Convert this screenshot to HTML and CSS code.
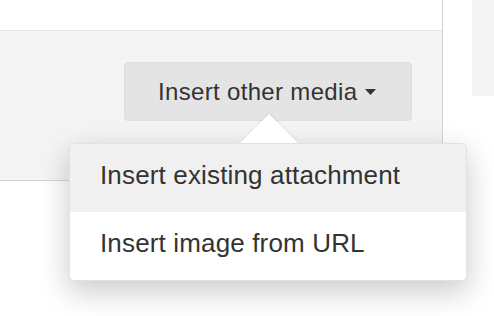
FILE: index.html
```html
<!DOCTYPE html>
<html>
<head>
<meta charset="utf-8">
<link rel="stylesheet" href="styles.css">
</head>
<body>
<div class="page">
  <div class="panel">
    <div class="panel-top"></div>
    <div class="panel-footer">
      <button class="btn">
        <span>Insert other media</span>
        <svg class="caret" width="11" height="6" viewBox="0 0 11 6"><path d="M0 0 H11 L5.5 6 Z" fill="#333"/></svg>
      </button>
    </div>
  </div>
  <div class="side"></div>
  <div class="menu">
    <div class="arrow"></div>
    <div class="item active">Insert existing attachment</div>
    <div class="item">Insert image from URL</div>
  </div>
</div>
</body>
</html>
```

FILE: styles.css
```css
html, body {
  margin: 0;
  padding: 0;
  background: #fff;
}
.page {
  position: relative;
  display: flex;
  align-items: flex-start;
  gap: 29px;
  width: 494px;
  height: 316px;
  overflow: hidden;
  font-family: "Liberation Sans", Arial, sans-serif;
}
.panel {
  width: 442px;
  flex: none;
  border-right: 1px solid #d2d2d2;
}
.panel-top {
  height: 30px;
  background: #fff;
}
.panel-footer {
  background: #f4f4f4;
  border-top: 1px solid #e4e4e4;
  border-bottom: 1px solid #d4d4d4;
  display: flex;
  justify-content: flex-end;
  align-items: flex-start;
  padding: 31px 30px 0 0;
  box-sizing: border-box;
  height: 151px;
}
.btn {
  display: flex;
  align-items: center;
  gap: 8px;
  width: 288px;
  height: 59px;
  box-sizing: border-box;
  padding: 0 0 0 33px;
  background: #e4e4e4;
  border: 1px solid #dedede;
  border-radius: 4px;
  font-family: inherit;
  font-size: 24px;
  letter-spacing: 0.33px;
  color: #333;
  line-height: 24px;
  white-space: nowrap;
}
.btn span {
  padding-top: 1px;
  flex: none;
}
.caret {
  display: block;
  flex: none;
}
.side {
  width: 22px;
  height: 96px;
  background: #f5f5f5;
  flex: none;
}
.menu {
  position: absolute;
  left: 69px;
  top: 143px;
  width: 398px;
  box-sizing: border-box;
  background: #fff;
  border: 1px solid #e2e2e2;
  border-radius: 5px;
  box-shadow: 0 10px 30px rgba(0, 0, 0, 0.22);
}
.arrow {
  position: absolute;
  left: 170px;
  top: -30px;
  width: 0;
  height: 0;
  border-left: 29px solid transparent;
  border-right: 29px solid transparent;
  border-bottom: 29px solid #fff;
  filter: drop-shadow(0 -1px 1px rgba(0, 0, 0, 0.06));
}
.item {
  position: relative;
  height: 68px;
  box-sizing: border-box;
  padding: 17px 30px 0;
  font-size: 26px;
  letter-spacing: 0.15px;
  line-height: 28px;
  color: #333;
  white-space: nowrap;
}
.item.active {
  background: #f0f0f0;
  border-radius: 4px 4px 0 0;
}
```
